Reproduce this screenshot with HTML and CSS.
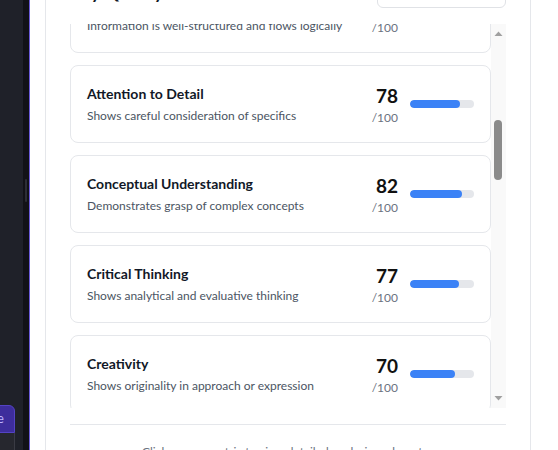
FILE: index.html
```html
<!DOCTYPE html>
<html lang="en">
<head>
<meta charset="utf-8">
<title>Quality Metrics</title>
<link rel="stylesheet" href="styles.css">
</head>
<body>
<div class="app">
  <aside class="sidebar">
    <button class="side-btn" type="button">Analyze</button>
    <div class="side-input"></div>
  </aside>
  <div class="strip"><div class="strip-thumb"></div></div>
  <section class="drawer">
    <div class="modal">
      <header class="modal-head">
        <h2 class="modal-title">Key Quality Metrics</h2>
        <div class="select">All metrics</div>
      </header>
      <div class="scroll-wrap">
        <div class="scroller" id="scroller">
          <div class="list">
            <div class="card"><div class="info"><div class="title">Clarity of Expression</div><div class="desc">Ideas are communicated clearly and precisely</div></div><div class="score"><div class="num"><div class="val">88</div><div class="max">/100</div></div><div class="bar"><div class="fill" style="width:88%"></div></div></div></div>
            <div class="card"><div class="info"><div class="title">Argument Strength</div><div class="desc">Claims are well supported and persuasive</div></div><div class="score"><div class="num"><div class="val">81</div><div class="max">/100</div></div><div class="bar"><div class="fill" style="width:81%"></div></div></div></div>
            <div class="card"><div class="info"><div class="title">Use of Evidence</div><div class="desc">Relevant sources and examples are used</div></div><div class="score"><div class="num"><div class="val">79</div><div class="max">/100</div></div><div class="bar"><div class="fill" style="width:79%"></div></div></div></div>
            <div class="card"><div class="info"><div class="title">Relevance to Topic</div><div class="desc">Stays focused on the central question</div></div><div class="score"><div class="num"><div class="val">86</div><div class="max">/100</div></div><div class="bar"><div class="fill" style="width:86%"></div></div></div></div>
            <div class="card"><div class="info"><div class="title">Depth of Analysis</div><div class="desc">Explores ideas beyond the surface level</div></div><div class="score"><div class="num"><div class="val">75</div><div class="max">/100</div></div><div class="bar"><div class="fill" style="width:75%"></div></div></div></div>
            <div class="card"><div class="info"><div class="title">Organization</div><div class="desc">Information is well-structured and flows logically</div></div><div class="score"><div class="num"><div class="val">84</div><div class="max">/100</div></div><div class="bar"><div class="fill" style="width:84%"></div></div></div></div>
            <div class="card"><div class="info"><div class="title">Attention to Detail</div><div class="desc">Shows careful consideration of specifics</div></div><div class="score"><div class="num"><div class="val">78</div><div class="max">/100</div></div><div class="bar"><div class="fill" style="width:78%"></div></div></div></div>
            <div class="card"><div class="info"><div class="title">Conceptual Understanding</div><div class="desc">Demonstrates grasp of complex concepts</div></div><div class="score"><div class="num"><div class="val">82</div><div class="max">/100</div></div><div class="bar"><div class="fill" style="width:82%"></div></div></div></div>
            <div class="card"><div class="info"><div class="title">Critical Thinking</div><div class="desc">Shows analytical and evaluative thinking</div></div><div class="score"><div class="num"><div class="val">77</div><div class="max">/100</div></div><div class="bar"><div class="fill" style="width:77%"></div></div></div></div>
            <div class="card"><div class="info"><div class="title">Creativity</div><div class="desc">Shows originality in approach or expression</div></div><div class="score"><div class="num"><div class="val">70</div><div class="max">/100</div></div><div class="bar"><div class="fill" style="width:70%"></div></div></div></div>
            <div class="card"><div class="info"><div class="title">Coherence</div><div class="desc">Ideas connect smoothly from point to point</div></div><div class="score"><div class="num"><div class="val">83</div><div class="max">/100</div></div><div class="bar"><div class="fill" style="width:83%"></div></div></div></div>
            <div class="card"><div class="info"><div class="title">Vocabulary</div><div class="desc">Uses precise and varied word choice</div></div><div class="score"><div class="num"><div class="val">80</div><div class="max">/100</div></div><div class="bar"><div class="fill" style="width:80%"></div></div></div></div>
          </div>
        </div>
        <div class="vbar" aria-hidden="true">
          <div class="vbar-btn">
            <svg width="15" height="19" viewBox="0 0 15 19"><path d="M3.5 12 L7.5 7.5 L11.5 12 Z" fill="#a0a0a0"/></svg>
          </div>
          <div class="vbar-track"><div class="vbar-thumb"></div></div>
          <div class="vbar-btn">
            <svg width="15" height="19" viewBox="0 0 15 19"><path d="M3.5 7 L7.5 11.5 L11.5 7 Z" fill="#a0a0a0"/></svg>
          </div>
        </div>
      </div>
      <footer class="modal-foot">Click on any metric to view detailed analysis and quotes</footer>
    </div>
  </section>
</div>
<script src="script.js"></script>
</body>
</html>
```
FILE: styles.css
```css
* { box-sizing: border-box; }
html, body { margin: 0; height: 100%; }
body {
  font-family: "Lato", "Noto Sans", sans-serif;
  background: #ffffff;
  overflow: hidden;
}
.app {
  display: flex;
  height: 450px;
  overflow: hidden;
}
.sidebar {
  width: 23px;
  flex-shrink: 0;
  background: #1f2129;
  display: flex;
  flex-direction: column;
  justify-content: flex-end;
  align-items: flex-end;
  padding-right: 8px;
  overflow: hidden;
}
.side-btn {
  width: 120px;
  flex-shrink: 0;
  height: 28px;
  border: 1px solid #5443c4;
  border-radius: 6px 6px 0 0;
  background: #3d2d9c;
  color: #bfb3ff;
  font-family: inherit;
  font-size: 13px;
  text-align: right;
  padding: 0 10px 2px 0;
}
.side-input {
  width: 120px;
  flex-shrink: 0;
  height: 17px;
  background: #26272e;
  border-right: 1px solid #3a3b44;
}
.strip {
  width: 6px;
  flex-shrink: 0;
  background: #121217;
  padding-top: 179px;
}
.strip-thumb {
  width: 2px;
  height: 23px;
  margin-left: 2px;
  background: #2c2e36;
  border-radius: 1px;
}
.drawer {
  flex: 1;
  border-left: 1px solid #6a5ad8;
  background: #ffffff;
  padding-left: 15px;
  overflow: hidden;
}
.modal {
  width: 486px;
  margin-top: -53px;
  border: 1px solid #e5e7eb;
  border-radius: 12px;
  padding: 24px;
  background: #fff;
}
.modal-head {
  display: flex;
  align-items: center;
  justify-content: space-between;
  height: 36px;
  margin-bottom: 16px;
}
.modal-title {
  margin: 4px 0 0;
  font-size: 18px;
  font-weight: 700;
  color: #111827;
  line-height: 28px;
}
.select {
  width: 129px;
  height: 36px;
  border: 1px solid #e0e2e6;
  border-radius: 6px;
  font-size: 13px;
  color: #374151;
  padding: 8px 12px;
}
.scroll-wrap {
  display: flex;
  height: 384px;
}
.scroller {
  flex: 1;
  overflow: hidden;
}
.vbar {
  width: 15px;
  flex-shrink: 0;
  background: #f9f9f9;
  display: flex;
  flex-direction: column;
}
.vbar-btn {
  height: 19px;
  flex-shrink: 0;
}
.vbar-btn svg { display: block; }
.vbar-track {
  flex: 1;
  padding-top: 77px;
}
.vbar-thumb {
  width: 8px;
  height: 60px;
  margin-left: 3px;
  border-radius: 4px;
  background: #8b8b8b;
}
.list {
  display: flex;
  flex-direction: column;
  gap: 12px;
}
.card {
  height: 78px;
  flex-shrink: 0;
  border: 1px solid #e5e7eb;
  border-radius: 8px;
  padding: 16px;
  display: flex;
  align-items: center;
  justify-content: space-between;
  background: #fff;
}
.info {
  display: flex;
  flex-direction: column;
  gap: 3px;
}
.title {
  font-size: 14px;
  line-height: 20px;
  font-weight: 700;
  color: #111827;
}
.desc {
  font-size: 12px;
  line-height: 18px;
  color: #4b5563;
}
.score {
  display: flex;
  align-items: center;
  gap: 12px;
}
.num {
  text-align: right;
}
.val {
  font-size: 19px;
  line-height: 28px;
  font-weight: 700;
  color: #111111;
}
.max {
  font-size: 12px;
  line-height: 16px;
  color: #6b7280;
}
.bar {
  width: 64px;
  height: 8px;
  border-radius: 4px;
  background: #e5e7eb;
  overflow: hidden;
}
.fill {
  height: 100%;
  border-radius: 4px;
  background: #3b82f6;
}
.modal-foot {
  margin-top: 16px;
  border-top: 1px solid #e5e7eb;
  padding-top: 17px;
  text-align: center;
  font-size: 12px;
  line-height: 20px;
  color: #6b7280;
}
```
FILE: script.js
```js
document.getElementById('scroller').scrollTop = 499;
```
